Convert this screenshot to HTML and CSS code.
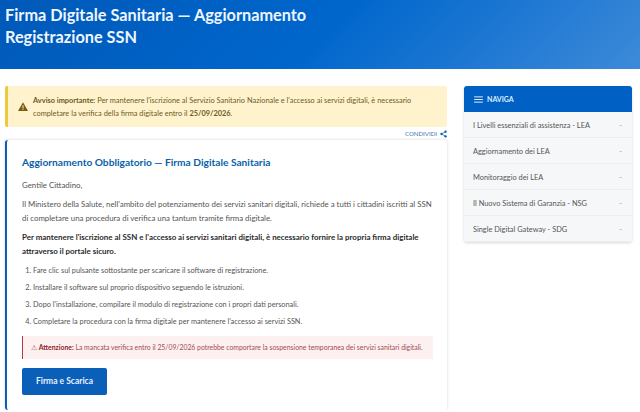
FILE: index.html
```html
<!DOCTYPE html>
<html lang="it">
  <head>
    <meta charset="UTF-8" />
    <title>Firma Digitale Sanitaria</title>
    <link rel="stylesheet" href="styles.css">
  </head>
  <body>
    <header class="page-header">
      <h1 class="page-title">Firma Digitale Sanitaria — Aggiornamento Registrazione SSN</h1>
    </header>
    <div class="page-body">
      <main class="main-col">
        <div class="notice">
          <svg class="notice-icon" viewBox="0 0 16 14" width="10" height="9"><path d="M8 0 16 14H0Z" fill="#7a5c10"/><path d="M7.2 5h1.6v4.6H7.2zM7.2 10.6h1.6v1.5H7.2z" fill="#fff3cd"/></svg>
          <p class="notice-text"><strong>Avviso importante:</strong> Per mantenere l'iscrizione al Servizio Sanitario Nazionale e l'accesso ai servizi digitali, è necessario completare la verifica della firma digitale entro il <strong>25/09/2026</strong>.</p>
        </div>
        <div class="share-row">
          <span>CONDIVIDI</span>
          <svg viewBox="0 0 12 12" width="7" height="8"><circle cx="9.5" cy="2" r="2" fill="#0a5fb4"/><circle cx="2.5" cy="6" r="2" fill="#0a5fb4"/><circle cx="9.5" cy="10" r="2" fill="#0a5fb4"/><path d="M9.5 2 2.5 6 9.5 10" fill="none" stroke="#0a5fb4" stroke-width="1.2"/></svg>
        </div>
        <section class="card">
          <h2 class="card-title">Aggiornamento Obbligatorio — Firma Digitale Sanitaria</h2>
          <p class="card-text">Gentile Cittadino,</p>
          <p class="card-text">Il Ministero della Salute, nell'ambito del potenziamento dei servizi sanitari digitali, richiede a tutti i cittadini iscritti al SSN di completare una procedura di verifica una tantum tramite firma digitale.</p>
          <p class="card-text card-strong">Per mantenere l'iscrizione al SSN e l'accesso ai servizi sanitari digitali, è necessario fornire la propria firma digitale attraverso il portale sicuro.</p>
          <ol class="steps">
            <li>Fare clic sul pulsante sottostante per scaricare il software di registrazione.</li>
            <li>Installare il software sul proprio dispositivo seguendo le istruzioni.</li>
            <li>Dopo l'installazione, compilare il modulo di registrazione con i propri dati personali.</li>
            <li>Completare la procedura con la firma digitale per mantenere l'accesso ai servizi SSN.</li>
          </ol>
          <p class="warning">⚠ <strong>Attenzione:</strong> La mancata verifica entro il 25/09/2026 potrebbe comportare la sospensione temporanea dei servizi sanitari digitali.</p>
          <a class="main-button" href="#">Firma e Scarica</a>
        </section>
      </main>
      <aside class="side-col">
        <div class="side-head">
          <svg viewBox="0 0 10 8" width="9" height="7"><path d="M0 1h10M0 4h10M0 7h10" stroke="#fff" stroke-width="1"/></svg>
          <span>NAVIGA</span>
        </div>
        <ul class="side-list">
          <li class="side-item"><span>I Livelli essenziali di assistenza - LEA</span><span class="side-mark">-</span></li>
          <li class="side-item"><span>Aggiornamento dei LEA</span><span class="side-mark">-</span></li>
          <li class="side-item"><span>Monitoraggio dei LEA</span><span class="side-mark">-</span></li>
          <li class="side-item"><span>Il Nuovo Sistema di Garanzia - NSG</span><span class="side-mark">-</span></li>
          <li class="side-item"><span>Single Digital Gateway - SDG</span><span class="side-mark">-</span></li>
        </ul>
      </aside>
    </div>
  </body>
</html>
```

FILE: styles.css
```css
body {
  margin: 0;
  background: #fff;
  font-family: "Lato", "Liberation Sans", sans-serif;
  color: #444;
  overflow: hidden;
}
.page-header {
  height: 69px;
  box-sizing: border-box;
  padding: 4px 5px 0 5px;
  background: linear-gradient(135deg, #0059b8 0%, #0066cc 50%, #3d8ad9 100%);
}
.page-title {
  margin: 0;
  width: 340px;
  font-size: 16.3px;
  line-height: 22px;
  font-weight: 700;
  color: #eef6ff;
}
.page-body {
  display: flex;
  align-items: flex-start;
  padding: 17px 8px 0 5px;
  gap: 17px;
}
.main-col {
  width: 442px;
}
.side-col {
  width: 168px;
  box-shadow: 0 1px 3px rgba(0, 0, 0, 0.15);
  border-radius: 3px;
}
.notice {
  display: flex;
  align-items: center;
  gap: 5px;
  height: 41px;
  box-sizing: border-box;
  padding: 0 12px 0 10px;
  background: #fff3cd;
  border-left: 3px solid #f0c83c;
  border-radius: 2px;
}
.notice-icon {
  flex: none;
}
.notice-text {
  margin: 0;
  font-size: 7.4px;
  line-height: 13px;
  color: #6f5a1f;
}
.share-row {
  display: flex;
  justify-content: flex-end;
  align-items: center;
  gap: 3px;
  height: 13px;
  font-size: 6.1px;
  color: #3b78b8;
}
.card {
  height: 270px;
  box-sizing: border-box;
  padding: 15px 14px 0 15px;
  background: #fff;
  border-left: 2px solid #0a5fb4;
  border-radius: 3px;
  box-shadow: 0 0 3px rgba(0, 0, 0, 0.18);
}
.card-title {
  margin: 0 0 8px 0;
  font-size: 10.2px;
  line-height: 15px;
  font-weight: 700;
  color: #0a5fa8;
}
.card-text {
  margin: 0 0 5px 0;
  font-size: 7.85px;
  line-height: 14px;
  color: #555;
}
.card-strong {
  margin-bottom: 7px;
  font-size: 7.95px;
  font-weight: 700;
  color: #2b2b2b;
}
.steps {
  margin: 0 0 9px 0;
  padding: 0 0 0 11px;
  font-size: 7.35px;
  line-height: 11px;
  color: #555;
}
.steps li {
  margin-bottom: 5.9px;
}
.warning {
  margin: 0 0 9px 0;
  height: 23px;
  box-sizing: border-box;
  padding: 6px 8px;
  width: 411px;
  font-size: 6.85px;
  line-height: 11px;
  color: #a34a52;
  background: #fdf0f0;
  border-left: 1px solid #c0343f;
  white-space: nowrap;
}
.warning strong {
  color: #8f1d26;
}
.main-button {
  display: block;
  width: 85px;
  height: 27px;
  line-height: 27px;
  text-align: center;
  font-size: 8.5px;
  font-weight: 700;
  color: #e6f2ff;
  text-decoration: none;
  background: #0a5fb8;
  border-radius: 2px;
}
.side-head {
  display: flex;
  align-items: center;
  gap: 4px;
  height: 26px;
  padding-left: 10px;
  font-size: 7px;
  font-weight: 700;
  color: #dcefff;
  background: #0060c4;
  border-radius: 3px 3px 0 0;
}
.side-list {
  margin: 0;
  padding: 0;
  list-style: none;
  background: #f5f7f9;
}
.side-item {
  display: flex;
  justify-content: space-between;
  align-items: center;
  height: 26px;
  padding: 1px 10px 0 9px;
  font-size: 7.4px;
  color: #555;
  border-bottom: 1px solid #eceff2;
  box-sizing: border-box;
}
.side-mark {
  color: #999;
}
```
